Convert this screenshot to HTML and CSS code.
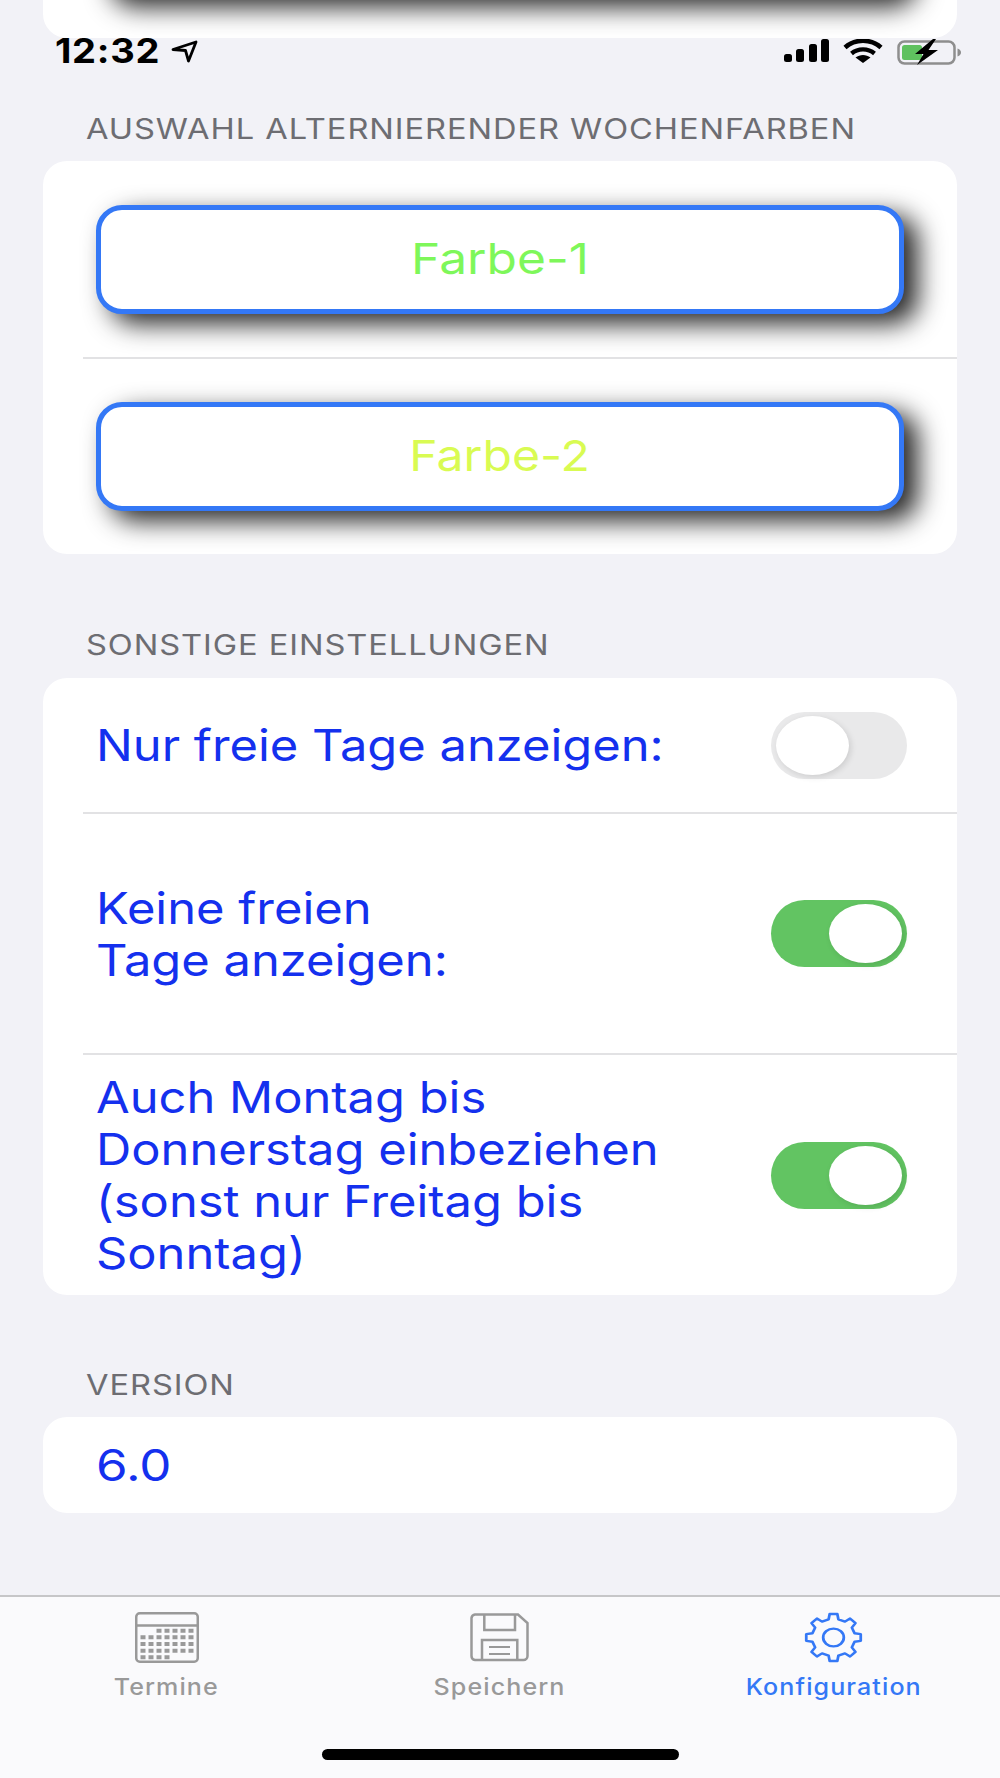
FILE: index.html
```html
<!DOCTYPE html>
<html lang="de">
<head>
    <meta charset="UTF-8">
    <meta name="viewport" content="width=device-width, initial-scale=1.0">
    <title>Konfiguration</title>
    <link rel="stylesheet" href="styles.css">
</head>
<body>
    <div class="card card-cut">
        <div class="color-btn color-btn-cut"></div>
    </div>

    <div class="status-bar">
        <div class="status-left">
            <span class="clock">12:32</span>
            <svg class="nav-arrow" viewBox="0 0 27 23"><path d="M2 9.500 25 2 17.500 21 14.500 10.500Z" fill="none" stroke="#000" stroke-width="2.800" stroke-linejoin="round"/></svg>
        </div>
        <div class="status-right">
            <svg class="signal" viewBox="0 0 45 23"><rect x="0" y="15" width="8" height="8" rx="2.500"/><rect x="12" y="10" width="8" height="13" rx="2.500"/><rect x="25" y="5" width="8" height="18" rx="2.500"/><rect x="37" y="0" width="8" height="23" rx="2.500"/></svg>
            <svg class="wifi" viewBox="0 0 40 24"><path d="M2 8.500C12-.5 28-.5 38 8.500" fill="none" stroke="#000" stroke-width="4.600"/><path d="M8.500 14.500C15 9 25 9 31.500 14.500" fill="none" stroke="#000" stroke-width="4.400"/><path d="M12.500 18.500 20 24l7.500-5.500C23 15 17 15 12.500 18.500Z"/></svg>
            <svg class="battery" viewBox="0 0 66 26"><rect x="1.500" y="2.500" width="56" height="22" rx="6" fill="none" stroke="#8e8e8e" stroke-width="2.500"/><rect x="5" y="6" width="20" height="15" rx="2.500" fill="#5fc15f"/><path d="M60.500 9.500c2.500.8 3.500 2.300 3.500 4s-1 3.200-3.500 4Z" fill="#8e8e8e"/><path d="M36 0 18 15h8.500L20 26 41 11h-9.500L39 0Z"/></svg>
        </div>
    </div>

    <section class="section">
        <div class="section-label">AUSWAHL ALTERNIERENDER WOCHENFARBEN</div>
        <div class="card">
            <div class="btn-row">
                <button class="color-btn color-1"><span class="btn-text">Farbe-1</span></button>
            </div>
            <div class="btn-row btn-row-line">
                <button class="color-btn color-2"><span class="btn-text">Farbe-2</span></button>
            </div>
        </div>
    </section>

    <section class="section section-b">
        <div class="section-label">SONSTIGE EINSTELLUNGEN</div>
        <div class="card">
            <div class="row row-short">
                <span class="row-text">Nur freie Tage anzeigen:</span>
                <span class="toggle"><span class="thumb"></span></span>
            </div>
            <div class="row row-tall row-line">
                <span class="row-text">Keine freien<br>Tage anzeigen:</span>
                <span class="toggle on"><span class="thumb"></span></span>
            </div>
            <div class="row row-tall row-last row-line">
                <span class="row-text">Auch Montag bis<br>Donnerstag einbeziehen<br>(sonst nur Freitag bis<br>Sonntag)</span>
                <span class="toggle on"><span class="thumb"></span></span>
            </div>
        </div>
    </section>

    <section class="section">
        <div class="section-label">VERSION</div>
        <div class="card">
            <div class="row row-version">
                <span class="row-text row-text-num">6.0</span>
            </div>
        </div>
    </section>

    <nav class="tab-bar">
        <div class="tabs">
            <div class="tab">
                <svg class="tab-icon" width="64" height="51" viewBox="0 0 64 51">
                    <rect x="1.250" y="1.250" width="61.500" height="48.500" rx="3.500" fill="none" stroke="#999" stroke-width="2.500"/>
                    <path d="M1 13.500H63" stroke="#999" stroke-width="2.500"/>
                    <path d="M21.500 18.700H58.500M5.500 25.300H58.500M5.500 32H58.500M5.500 38.700H58.500M5.500 45.300H37.500" fill="none" stroke="#999" stroke-width="4" stroke-dasharray="5 3"/>
                </svg>
                <span class="tab-label">Termine</span>
            </div>
            <div class="tab">
                <svg class="tab-icon" width="59" height="51" viewBox="0 0 59 51">
                    <path d="M5 2.500H48L57.500 11V44A4 4 0 0 1 53.500 48H5A4 4 0 0 1 1.500 44V6A4 4 0 0 1 5 2.500Z" fill="none" stroke="#999" stroke-width="2.500"/>
                    <path d="M14.300 2.500V18H45V2.500M12 48V28H47.300V48" fill="none" stroke="#999" stroke-width="2.500"/>
                    <path d="M19 35H40M19 42H40" stroke="#999" stroke-width="2"/>
                </svg>
                <span class="tab-label">Speichern</span>
            </div>
            <div class="tab tab-active">
                <svg class="tab-icon" width="59" height="51" viewBox="0 0 60 60" preserveAspectRatio="none">
                    <polygon points="26.100,2.300 33.900,2.300 34.950,8.570 41.660,11.340 46.850,7.640 52.360,13.150 48.660,18.340 51.430,25.050 57.700,26.100 57.700,33.900 51.430,34.950 48.660,41.660 52.360,46.850 46.850,52.360 41.660,48.660 34.950,51.430 33.900,57.700 26.100,57.700 25.050,51.430 18.340,48.660 13.150,52.360 7.640,46.850 11.340,41.660 8.570,34.950 2.300,33.900 2.300,26.100 8.570,25.050 11.340,18.340 7.640,13.150 13.150,7.640 18.340,11.340 25.050,8.570" fill="none" stroke="#3478f6" stroke-width="2.800" stroke-linejoin="round"/>
                    <circle cx="30" cy="30" r="10.500" fill="none" stroke="#3478f6" stroke-width="2.800"/>
                </svg>
                <span class="tab-label">Konfiguration</span>
            </div>
        </div>
        <div class="home-bar"></div>
    </nav>
</body>
</html>
```

FILE: styles.css
```css
* {
    box-sizing: border-box;
}
body {
    margin: 0;
    height: 1778px;
    display: flex;
    flex-direction: column;
    background-color: #f2f2f7;
    font-family: Inter, "Liberation Sans", sans-serif;
    overflow: hidden;
}
.card {
    margin: 0 43px;
    background-color: #fff;
    border-radius: 24px;
    overflow: hidden;
}
.card-cut {
    height: 38px;
    flex-shrink: 0;
    border-radius: 0 0 24px 24px;
}
.color-btn-cut {
    height: 109px;
    margin: -112px 0 0 53px;
}
.status-bar {
    height: 73px;
    flex-shrink: 0;
    display: flex;
    justify-content: space-between;
    align-items: flex-start;
    padding: 0 37px 0 55px;
}
.status-left {
    display: flex;
    align-items: center;
    gap: 22px;
}
/* the reference glyphs are wider than any installed font, hence the scaleX below */
.clock {
    font-size: 34px;
    line-height: 26px;
    font-weight: 700;
    color: #000;
    letter-spacing: 0.6px;
    transform: scaleX(1.12);
    transform-origin: left center;
}
.nav-arrow {
    width: 27px;
    height: 23px;
}
.status-right {
    display: flex;
    align-items: flex-start;
    padding-top: 1px;
    gap: 14px;
}
.signal {
    width: 45px;
    height: 23px;
}
.wifi {
    width: 40px;
    height: 24px;
}
.battery {
    width: 66px;
    height: 26px;
}
.section {
    flex-shrink: 0;
    margin-bottom: 73px;
}
.section-b {
    margin-bottom: 72px;
}
.section-label {
    width: fit-content;
    height: 36px;
    line-height: 36px;
    margin: 0 0 14px 86px;
    font-size: 28px;
    letter-spacing: 0.8px;
    color: #6d6d72;
    white-space: nowrap;
    transform: scaleX(1.165);
    transform-origin: left center;
}
.section-b .section-label {
    margin-bottom: 15px;
}
.btn-row {
    height: 196px;
    padding: 44px 53px 0 53px;
}
.btn-row-line {
    height: 197px;
    position: relative;
    border-top: 1px solid transparent;
}
.btn-row-line::before {
    content: "";
    position: absolute;
    top: -1px;
    left: 40px;
    right: 0;
    border-top: 2px solid #e2e2e4;
}
.color-btn {
    display: block;
    width: 808px;
    height: 109px;
    border: 5px solid #3478f6;
    border-radius: 26px;
    background-color: #fff;
    box-shadow: 14px 10px 26px rgba(0, 0, 0, 0.85);
    font-family: Inter, "Liberation Sans", sans-serif;
    font-size: 43px;
    padding: 0 0 4px;
}
.btn-text {
    display: inline-block;
    transform: scaleX(1.155);
}
.color-1 {
    color: #7ef75a;
}
.color-2 {
    color: #d9fb52;
}
.color-2 .btn-text {
    transform: scaleX(1.12);
}
.row {
    display: flex;
    justify-content: space-between;
    align-items: center;
    margin-left: 40px;
    padding: 0 50px 0 13px;
}
.row-short {
    height: 134px;
}
.row-tall {
    height: 241px;
}
.row-last {
    height: 242px;
}
.row-line {
    border-top: 2px solid #e2e2e4;
}
.row-version {
    height: 96px;
}
.row-text {
    font-size: 44px;
    line-height: 52px;
    color: #1430ee;
    transform: scaleX(1.11);
    transform-origin: left center;
}
.row-text-num {
    transform: scaleX(1.16);
}
.toggle {
    width: 136px;
    height: 67px;
    padding: 4px 5px;
    border-radius: 34px;
    background-color: #e9e9ea;
    display: flex;
}
.toggle.on {
    background-color: #62c462;
    justify-content: flex-end;
}
.thumb {
    width: 73px;
    height: 59px;
    border-radius: 50%;
    background-color: #fff;
    box-shadow: 2px 2px 6px rgba(0, 0, 0, 0.12);
}
.tab-bar {
    margin-top: auto;
    height: 183px;
    flex-shrink: 0;
    background-color: #fafafc;
    border-top: 2px solid #c6c6c8;
    padding-top: 15px;
}
.tabs {
    display: grid;
    grid-template-columns: repeat(3, 1fr);
}
.tab {
    display: flex;
    flex-direction: column;
    align-items: center;
}
.tab-icon {
    display: block;
}
.tab-label {
    margin-top: 9px;
    font-size: 23px;
    line-height: 30px;
    font-weight: 500;
    letter-spacing: 1px;
    color: #999;
    transform: scaleX(1.09);
}
.tab-active .tab-label {
    color: #3478f6;
}
.home-bar {
    width: 357px;
    height: 11px;
    margin: 47px auto 0;
    border-radius: 6px;
    background-color: #000;
}
```
